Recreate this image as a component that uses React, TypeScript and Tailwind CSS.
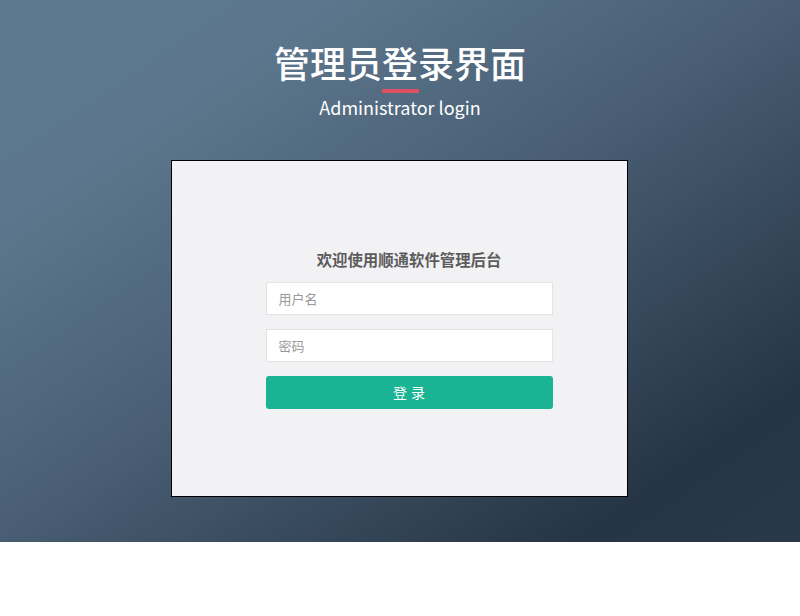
export default function App() {
    return (
        <div className="w-full min-h-[616px] bg-white font-['Noto_Sans_CJK_SC','Noto_Sans',sans-serif]">
            <section className="w-full h-[542px] bg-[linear-gradient(to_bottom_right,#5c7990_0%,#5c778d_20%,#4a5f75_48%,#263545_86%,#2a3949_100%)] flex flex-col items-center pt-[44px]">
                <h1 className="text-[36px] leading-[36px] text-white font-medium">管理员登录界面</h1>
                <div className="w-[37px] h-[4px] bg-[#df5060] mt-[9px]" />
                <p className="text-[18px] leading-[20px] text-white mt-[4px]">Administrator login</p>

                <div className="mt-[43px] mr-[2px] w-[457px] h-[337px] border border-black bg-[#f2f2f4] flex justify-center pl-[20px] pt-[86px]">
                    <div className="w-[287px] flex flex-col">
                        <h2 className="text-[15.4px] leading-[24px] font-bold text-[#5c5c5c] text-center">欢迎使用顺通软件管理后台</h2>
                        <input
                            type="text"
                            placeholder="用户名"
                            className="mt-[11px] h-[33px] w-full bg-white border border-[#e3e3e3] px-[12px] text-[13px] text-[#333] placeholder:text-[#999] outline-none"
                        />
                        <input
                            type="password"
                            placeholder="密码"
                            className="mt-[14px] h-[33px] w-full bg-white border border-[#e3e3e3] px-[12px] text-[13px] text-[#333] placeholder:text-[#999] outline-none"
                        />
                        <button className="mt-[14px] h-[33px] w-full rounded-[3px] bg-[#1ab394] text-white text-[14px] tracking-[4px] pl-[4px]">
                            登录
                        </button>
                    </div>
                </div>
            </section>
        </div>
    );
}
